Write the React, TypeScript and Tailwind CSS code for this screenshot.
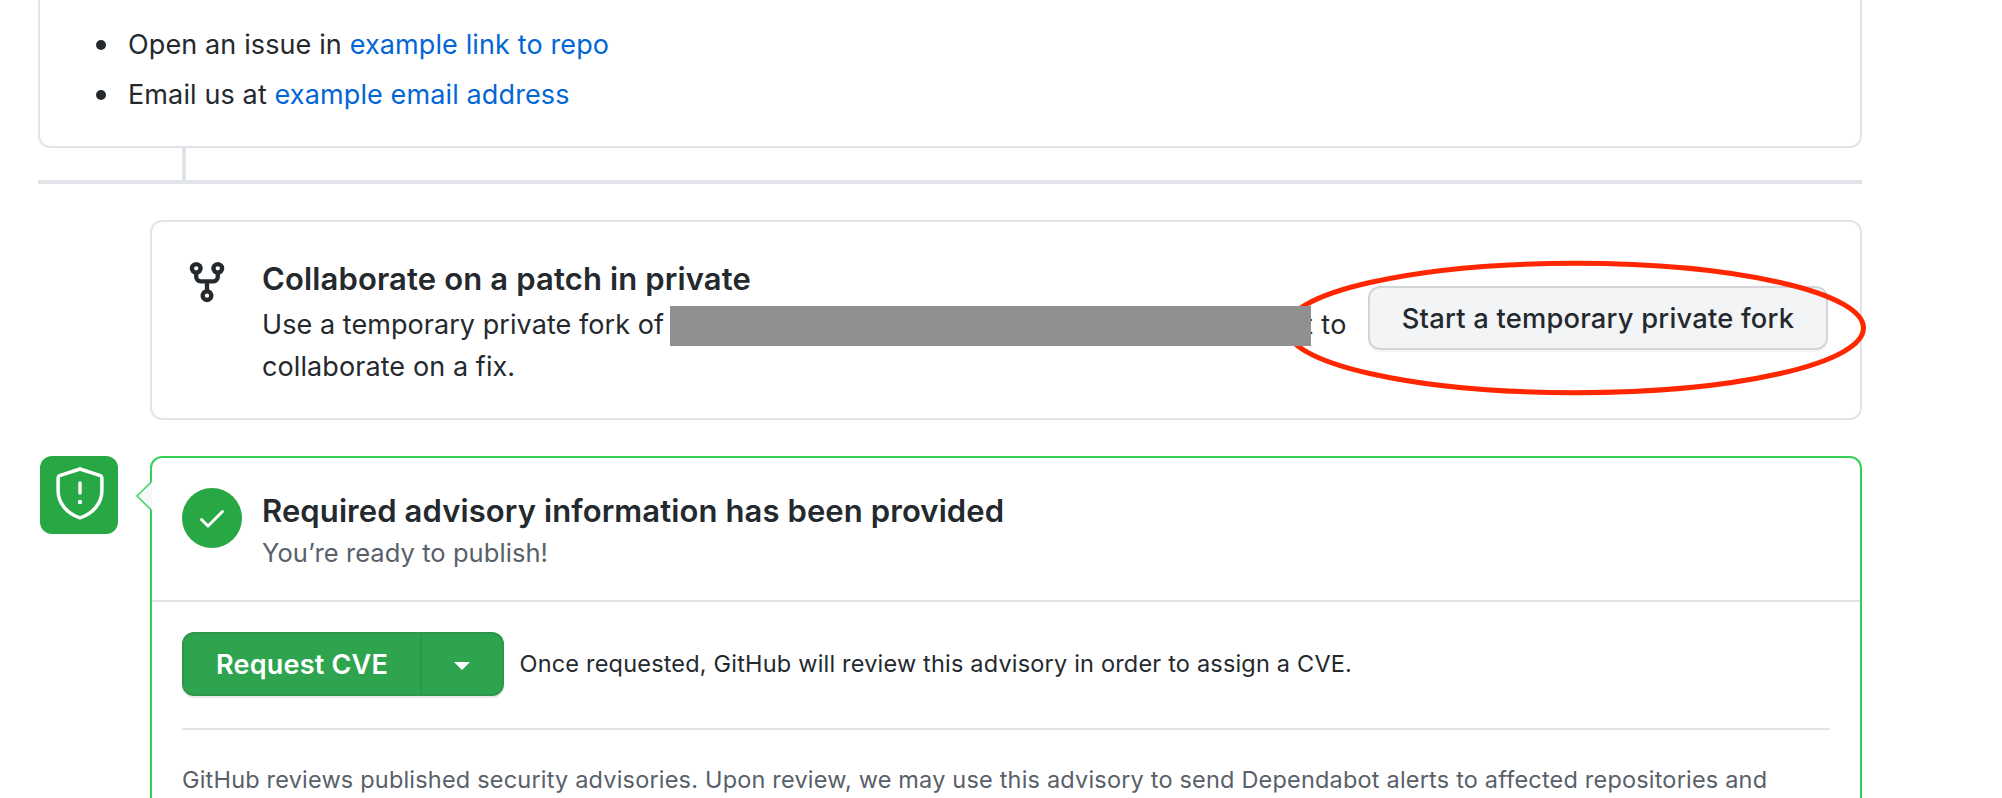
function ForkIcon() {
  return (
    <svg viewBox="0 0 16 16" className="h-[46px] w-[46px] shrink-0" fill="currentColor" aria-hidden="true">
      <path
        fillRule="evenodd"
        d="M5 3.25a.75.75 0 11-1.5 0 .75.75 0 011.5 0zm0 2.122a2.25 2.25 0 10-1.5 0v.878A2.25 2.25 0 005.75 8.5h1.5v2.128a2.251 2.251 0 101.5 0V8.5h1.5a2.25 2.25 0 002.25-2.25v-.878a2.25 2.25 0 10-1.5 0v.878a.75.75 0 01-.75.75h-4.5A.75.75 0 015 6.25v-.878zm3.75 7.378a.75.75 0 11-1.5 0 .75.75 0 011.5 0zm3-8.75a.75.75 0 100-1.5.75.75 0 000 1.5z"
      />
    </svg>
  )
}

function CheckIcon() {
  return (
    <svg viewBox="0 0 16 16" className="h-8 w-8" fill="currentColor" aria-hidden="true">
      <path
        fillRule="evenodd"
        d="M13.78 4.22a.75.75 0 010 1.06l-7.25 7.25a.75.75 0 01-1.06 0L2.22 9.28a.75.75 0 011.06-1.06L6 10.94l6.72-6.72a.75.75 0 011.06 0z"
      />
    </svg>
  )
}

function ShieldIcon() {
  return (
    <svg
      viewBox="0 0 78 78"
      className="h-[78px] w-[78px]"
      fill="none"
      stroke="currentColor"
      strokeWidth="3.5"
      strokeLinecap="round"
      strokeLinejoin="round"
      aria-hidden="true"
    >
      <path d="M40 13L60.4 19.6Q61.9 20.2 61.9 21.8V34.5C61.9 47 53.5 57.2 40 61.9C26.5 57.2 18.1 47 18.1 34.5V21.8Q18.1 20.2 19.6 19.6Z" />
      <path d="M40 27.1V36.9" />
      <circle cx="40" cy="46" r="2.2" fill="currentColor" stroke="none" />
    </svg>
  )
}

function ContactItem({ lead, link }: { lead: string; link: string }) {
  return (
    <li className="flex h-[42px] items-center whitespace-pre">
      <span className="mr-[22px] h-[10px] w-[10px] rounded-full bg-[#24292e]" />
      <span>{lead}</span>
      <a className="text-[#0366d6]">{link}</a>
    </li>
  )
}

function ForkPanel() {
  return (
    <section className="relative mt-9 ml-28 flex h-[200px] rounded-xl border-2 border-[#e1e4e8] pr-8 pl-[32px]">
      <div className="mt-[37px] w-[78px] shrink-0">
        <ForkIcon />
      </div>
      <div className="flex-1 pt-[33px]">
        <h3 className="text-[31px] leading-[48px] font-semibold tracking-[0.14px]">Collaborate on a patch in private</h3>
        <div className="mt-px flex h-[42px] items-center tracking-[0.06px] whitespace-pre">
          <span className="w-[408px] shrink-0">Use a temporary private fork of</span>
          <span className="relative z-20 mt-[2px] h-10 w-[641px] shrink-0 bg-[#909090]" />
          <span className="-ml-[7px] tracking-[0.4px]">t to</span>
        </div>
        <p className="leading-[42px] tracking-[0.09px]">collaborate on a fix.</p>
      </div>
      <button className="mt-16 flex h-16 w-[460px] shrink-0 items-center justify-center rounded-xl border-2 border-[#d2d4d6] bg-[#f3f4f6] pt-[2px] text-[27.3px] font-medium tracking-[0.22px] whitespace-nowrap shadow-[0_2px_0_rgba(27,31,35,0.04)]">
        Start a temporary private fork
      </button>
      <svg
        className="pointer-events-none absolute top-[36px] right-[-10px] z-10 h-[140px] w-[590px]"
        viewBox="0 0 590 140"
        fill="none"
        aria-hidden="true"
      >
        <ellipse cx="295" cy="70" rx="288.5" ry="64.7" stroke="#ff2600" strokeWidth="5" />
      </svg>
    </section>
  )
}

function PublishPanel() {
  return (
    <section className="mt-9 flex">
      <div className="mr-8 ml-[2px] h-[78px] w-[78px] shrink-0 rounded-xl bg-[#28a745] text-white">
        <ShieldIcon />
      </div>
      <div className="relative h-[400px] flex-1 rounded-xl border-2 border-[#34d058]">
        <svg className="absolute top-[23px] -left-[17px] h-[30px] w-[17px]" viewBox="0 0 17 30" aria-hidden="true">
          <path d="M17 0.5V29.5L16 29.2L2 15L16 0.8Z" fill="#f6f8fa" />
          <path d="M16.5 0.7L2 15L16.5 29.3" fill="none" stroke="#34d058" strokeWidth="1.4" />
        </svg>
        <header className="flex h-[144px] border-b-2 border-[#e1e4e8] pl-[30px]">
          <span className="mt-[30px] mr-5 flex h-[60px] w-[60px] items-center justify-center rounded-full bg-[#28a745] text-white">
            <CheckIcon />
          </span>
          <div className="pt-[29px]">
            <h3 className="text-[31px] leading-[48px] font-semibold tracking-[0.1px]">
              Required advisory information has been provided
            </h3>
            <p className="text-[25.5px] leading-9 tracking-[0.07px] text-[#586069]">You’re ready to publish!</p>
          </div>
        </header>
        <div className="px-[30px] pt-[30px]">
          <div className="flex items-center">
            <div className="flex h-16 w-[322px] rounded-xl border-2 border-[#2c974b] bg-[#2ea44f] text-white shadow-[0_2px_0_rgba(27,31,35,0.1)]">
              <button className="flex w-[238px] items-center justify-center border-r-2 border-[#2c974b] pt-[2px] text-[27px] font-semibold tracking-[0.22px]">
                Request CVE
              </button>
              <button className="flex flex-1 items-center justify-center pt-1" aria-label="More options">
                <span className="h-0 w-0 border-x-8 border-t-8 border-x-transparent border-t-white" />
              </button>
            </div>
            <p className="ml-[15.5px] text-[23.5px] tracking-[0.19px]">
              Once requested, GitHub will review this advisory in order to assign a CVE.
            </p>
          </div>
          <p className="mt-8 border-t-2 border-[#e1e4e8] pt-[32px] text-[23.5px] leading-9 tracking-[0.19px] whitespace-nowrap text-[#586069]">
            GitHub reviews published security advisories. Upon review, we may use this advisory to send Dependabot alerts to affected repositories and
          </p>
        </div>
      </div>
    </section>
  )
}

export default function App() {
  return (
    <main className="h-[798px] w-full overflow-hidden bg-white pr-[140px] pl-[38px] font-['Inter',sans-serif] text-[27px] tracking-[0.12px] text-[#24292e]">
      <section className="h-[148px] rounded-b-xl border-2 border-t-0 border-[#e1e4e8] pt-[24px] pl-[56px]">
        <ul className="flex flex-col gap-2">
          <ContactItem lead="Open an issue in " link="example link to repo" />
          <ContactItem lead="Email us at " link="example email address" />
        </ul>
      </section>
      <div className="h-9 border-b-4 border-[#e1e4e8] pl-36">
        <div className="h-8 w-1 bg-[#e1e4e8]" />
      </div>
      <ForkPanel />
      <PublishPanel />
    </main>
  )
}
